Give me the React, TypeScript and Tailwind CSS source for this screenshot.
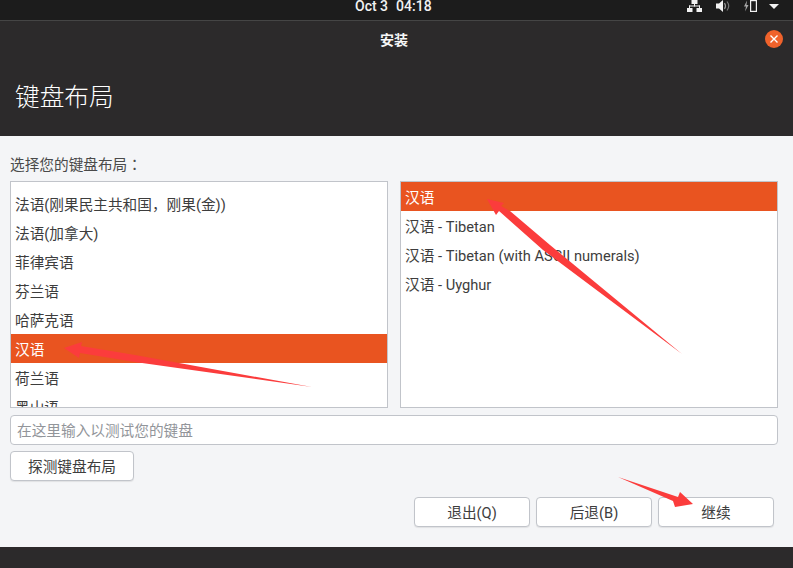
// App.tsx
const FONT = "font-['Roboto','Noto_Sans_CJK_SC',sans-serif]";

const leftRows = ["法语(刚果民主共和国，刚果(金))", "法语(加拿大)", "菲律宾语", "芬兰语", "哈萨克语", "汉语", "荷兰语", "黑山语"];
const rightRows = ["汉语", "汉语 - Tibetan", "汉语 - Tibetan (with ASCII numerals)", "汉语 - Uyghur"];

function Row({ label, selected }: { label: string; selected: boolean }) {
  return (
    <div
      className={`h-[29px] shrink-0 px-[4px] pt-[2px] flex items-center text-[14.67px] whitespace-nowrap ${
        selected ? "bg-[#e95420] text-white" : "text-[#3d3d3d]"
      }`}
    >
      {label}
    </div>
  );
}

function ListBox({ rows, selected, className }: { rows: string[]; selected: string; className: string }) {
  return (
    <div className={`w-[378px] bg-white border border-[#c1c4ca] overflow-hidden flex flex-col ${className}`}>
      {rows.map((r) => (
        <Row key={r} label={r} selected={r === selected} />
      ))}
    </div>
  );
}

function Button({ label, className }: { label: string; className: string }) {
  return (
    <button className={`h-[30px] pt-[1px] bg-white border border-[#c1c4ca] rounded-[4px] shadow-[0_1px_1px_rgba(0,0,0,0.08)] text-[14.67px] text-[#3d3d3d] flex items-center justify-center ${className}`}>
      {label}
    </button>
  );
}

function TrayIcons() {
  return (
    <div className="flex items-start">
      <svg width="15" height="12" viewBox="0 0 15 12" className="mr-[14px]" fill="#f2f2f2">
        <rect x="4.5" y="0" width="6" height="4" />
        <rect x="7" y="4" width="1" height="2.5" />
        <rect x="2" y="5.5" width="11" height="1" />
        <rect x="2" y="5.5" width="1" height="2.5" />
        <rect x="12" y="5.5" width="1" height="2.5" />
        <rect x="0" y="8" width="5.5" height="4" />
        <rect x="9.5" y="8" width="5.5" height="4" />
      </svg>
      <svg width="14" height="12" viewBox="0 0 14 12" className="mr-[14px]" fill="none">
        <path d="M0 3.5h3l4-3.5v12l-4-3.5H0z" fill="#f2f2f2" />
        <path d="M8.5 3c1.2 1.8 1.2 4.2 0 6" stroke="#9a9a9a" strokeWidth="1.2" />
        <path d="M11 1.5c2 2.6 2 6.4 0 9" stroke="#777" strokeWidth="1.2" />
      </svg>
      <svg width="13" height="12" viewBox="0 0 13 12" className="mr-[12px]" fill="none">
        <path d="M3 0.5 0 6.5h2L1 11.5 4.5 5H2.5z" fill="#a8a8a8" />
        <rect x="6.6" y="0.6" width="5.8" height="10.8" stroke="#f2f2f2" strokeWidth="1.2" />
      </svg>
      <svg width="10" height="5" viewBox="0 0 10 5" className="mt-[4px]">
        <path d="M0 0h10L5 5z" fill="#f2f2f2" />
      </svg>
    </div>
  );
}

export default function App() {
  return (
    <div className={`relative w-[793px] h-[568px] overflow-hidden flex flex-col bg-[#f4f5f7] ${FONT}`}>
      {/* top panel */}
      <div className="h-[20px] shrink-0 bg-[#1c1c1c] relative flex items-start justify-end pr-[14px]">
        <div className="absolute left-[355px] top-[0px] flex gap-[8px] text-[14px] leading-[12px] font-medium text-[#f2f2f2] whitespace-nowrap">
          <span>Oct 3</span>
          <span>04:18</span>
        </div>
        <TrayIcons />
      </div>

      {/* header */}
      <div className="h-[116px] shrink-0 bg-[#2c2a2b] border-t border-[#454545] flex flex-col">
        <div className="h-[39px] shrink-0 flex items-center justify-center relative">
          <span className="text-[14px] font-bold text-[#f7f7f7] ml-[-5px]">安装</span>
          <div className="absolute right-[10px] top-[9px] w-[18px] h-[18px] rounded-full bg-[#f0622b] flex items-center justify-center">
            <svg width="8" height="8" viewBox="0 0 8 8">
              <path d="M0.5 0.5l7 7M7.5 0.5l-7 7" stroke="#fff" strokeWidth="1.4" />
            </svg>
          </div>
        </div>
        <div className="pl-[15px] mt-[20px] text-[24.67px] font-light leading-[36px] text-white">键盘布局</div>
      </div>

      {/* content */}
      <div className="flex-1 flex flex-col px-[10px] pt-[18px]">
        <div className="text-[14.67px] leading-[20px] h-[27px] text-[#4a4a4a]">
          选择您的键盘布局<span className="font-['Noto_Sans_CJK_JP']">：</span>
        </div>
        <div className="flex gap-[12px] h-[227px]">
          <ListBox rows={leftRows} selected="汉语" className="pt-[7px] h-[227px]" />
          <ListBox rows={rightRows} selected="汉语" className="h-[227px]" />
        </div>
        <input
          placeholder="在这里输入以测试您的键盘"
          className="mt-[7px] h-[30px] pt-[1px] w-[768px] shrink-0 bg-white border border-[#c1c4ca] rounded-[4px] px-[6px] text-[14.67px] placeholder:text-[#92959a] outline-none"
        />
        <Button label="探测键盘布局" className="mt-[6px] w-[124px]" />
        <div className="mt-[16px] flex gap-[6px] justify-end pr-[9px]">
          <Button label="退出(Q)" className="w-[116px]" />
          <Button label="后退(B)" className="w-[116px]" />
          <Button label="继续" className="w-[116px]" />
        </div>
      </div>

      {/* footer */}
      <div className="h-[21px] shrink-0 bg-[#2c2a2b]" />

      {/* red annotation arrows pasted over the screenshot */}
      <svg className="absolute left-0 top-0 pointer-events-none" width="793" height="568" viewBox="0 0 793 568">
        <path d="M312 387 135 355 81 346 82 342 64 348 79 358 80 353 135 362z" fill="#fb3c3c" />
        <path d="M682 354 550 245 510 211 501 206 504 203 487 199 496 215 499 211 543 250z" fill="#fb3c3c" />
        <path d="M618 477 678 497 680 492 693 504 675 507 673 501z" fill="#fb3c3c" />
      </svg>
    </div>
  );
}
